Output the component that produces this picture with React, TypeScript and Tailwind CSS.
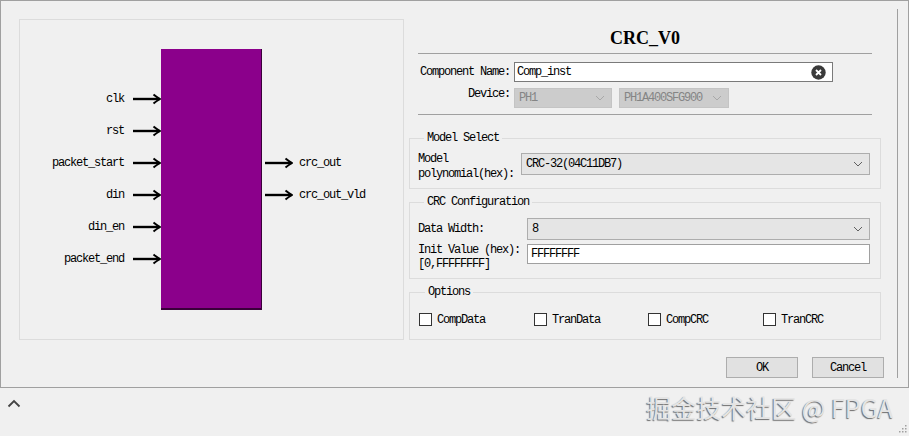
import React from "react";

const ui = "font-['Liberation_Mono',monospace] text-[12px] tracking-[-1.2px] text-black";

const inPorts = ["clk", "rst", "packet_start", "din", "din_en", "packet_end"];
const outPorts = ["crc_out", "crc_out_vld"];
const options = ["CompData", "TranData", "CompCRC", "TranCRC"];

const Arrow = () => (
  <svg width="28" height="12" viewBox="0 0 28 12" className="shrink-0">
    <path d="M0 6H26.5" stroke="#000" strokeWidth="2.4" />
    <path d="M20.5 1.5Q23.5 4 27 6Q23.5 8 20.5 10.5" fill="none" stroke="#000" strokeWidth="2" />
  </svg>
);

const Chevron = ({ color }: { color: string }) => (
  <svg width="10" height="6" viewBox="0 0 10 6" className="shrink-0">
    <path d="M1 1L5 5L9 1" fill="none" stroke={color} strokeWidth="1" />
  </svg>
);

const Select = ({ value, className, disabled }: { value: string; className: string; disabled?: boolean }) => (
  <div
    className={
      "flex items-center justify-between border pl-[4px] pr-[6px] " +
      (disabled ? "border-[#c4c4c4] bg-[#cccccc] text-[#858585] " : "border-[#adadad] bg-[#e5e5e5] ") +
      className
    }
  >
    <span>{value}</span>
    <Chevron color={disabled ? "#a8a8a8" : "#606060"} />
  </div>
);

const Legend = ({ children }: { children: React.ReactNode }) => (
  <legend className="ml-[6px] px-[3px] leading-[14px]">{children}</legend>
);

export default function App() {
  return (
    <div className={"relative h-[436px] w-[909px] overflow-hidden bg-[#f0f0f0] " + ui}>
      {/* dialog frame */}
      <div className="flex h-[388px] border border-[#a0a0a0]">
        {/* symbol preview */}
        <div className="w-[403px] shrink-0 pl-[18px] pt-[18px]">
          <div className="flex h-[321px] w-[385px] items-start border border-[#dcdcdc] pt-[29px]">
            <div className="flex w-[141px] flex-col pt-[34px]">
              {inPorts.map((p) => (
                <div key={p} className="flex h-[32px] items-center justify-end gap-[9px]">
                  <span>{p}</span>
                  <Arrow />
                </div>
              ))}
            </div>
            <div className="h-[261px] w-[101px] border-b-2 border-r border-[#3a003a] bg-[#8b008b]" />
            <div className="flex flex-col pl-[3px] pt-[98px]">
              {outPorts.map((p) => (
                <div key={p} className="flex h-[32px] items-center gap-[6px]">
                  <Arrow />
                  <span>{p}</span>
                </div>
              ))}
            </div>
          </div>
        </div>

        {/* settings */}
        <div className="pt-[8px]">
          <div className="w-[494px] border-r border-[#a0a0a0]">
            <div className="ml-[14px] flex h-[45px] w-[454px] items-end justify-center border-b border-[#a0a0a0] pb-[5px]">
              <span className="font-['Liberation_Serif',serif] text-[18px] font-bold leading-[20px] tracking-normal">CRC_V0</span>
            </div>

            <div className="ml-[14px] mt-[8px] flex items-center">
              <span className="w-[92px] text-right">Component Name:</span>
              <div className="ml-[4px] flex h-[20px] w-[319px] items-center justify-between border border-[#7a7a7a] bg-white pl-[2px] pr-[6px]">
                <span>Comp_inst</span>
                <svg width="15" height="15" viewBox="0 0 15 15">
                  <circle cx="7.5" cy="7.5" r="7.2" fill="#3a3a3a" />
                  <path d="M5 5L10 10M10 5L5 10" stroke="#fff" strokeWidth="1.8" />
                </svg>
              </div>
            </div>

            <div className="ml-[14px] mt-[6px] flex items-start">
              <span className="w-[92px] text-right leading-[12px]">Device:</span>
              <Select value="PH1" disabled className="ml-[4px] h-[20px] w-[98px]" />
              <Select value="PH1A400SFG900" disabled className="ml-[7px] h-[20px] w-[110px]" />
            </div>

            <div className="ml-[14px] mt-[6px] w-[454px] border-t border-[#a0a0a0]" />

            <fieldset className="ml-[5px] mt-[16px] w-[472px] border border-[#dcdcdc] pb-[6px] pl-[8px] pr-[9px] pt-[7px]">
              <Legend>Model Select</Legend>
              <div className="flex items-start">
                <span className="w-[103px] leading-[15px]">
                  Model
                  <br />
                  polynomial(hex):
                </span>
                <Select value="CRC-32(04C11DB7)" className="mt-[1px] h-[22px] w-[349px]" />
              </div>
            </fieldset>

            <fieldset className="ml-[5px] mt-[6px] w-[472px] border border-[#dcdcdc] pb-[7px] pl-[8px] pr-[9px] pt-[9px]">
              <Legend>CRC Configuration</Legend>
              <div className="flex items-center">
                <span className="w-[109px]">Data Width:</span>
                <Select value="8" className="h-[22px] w-[343px]" />
              </div>
              <div className="mt-[3px] flex items-start">
                <span className="w-[109px] leading-[14px]">
                  Init Value (hex):
                  <br />
                  [0,FFFFFFFF]
                </span>
                <div className="mt-[1px] flex h-[20px] w-[343px] items-center border border-[#a0a0a0] bg-white pl-[3px]">
                  FFFFFFFF
                </div>
              </div>
            </fieldset>

            <fieldset className="ml-[5px] mt-[6px] w-[472px] border border-[#dcdcdc] pb-[13px] pl-[9px] pt-[14px]">
              <Legend>Options</Legend>
              <div className="grid grid-cols-[115px_114px_115px_115px]">
                {options.map((o) => (
                  <label key={o} className="flex h-[13px] items-center gap-[5px]">
                    <span className="h-[13px] w-[13px] border border-[#333] bg-white" />
                    <span>{o}</span>
                  </label>
                ))}
              </div>
            </fieldset>

            <div className="mt-[17px] flex justify-end gap-[14px] pr-[13px]">
              <button className="h-[21px] w-[72px] border border-[#adadad] bg-[#e1e1e1]">OK</button>
              <button className="h-[21px] w-[72px] border border-[#adadad] bg-[#e1e1e1]">Cancel</button>
            </div>
          </div>
        </div>
      </div>

      {/* status strip */}
      <div className="flex h-[48px] items-start">
        <svg width="14" height="9" viewBox="0 0 14 9" className="ml-[7px] mt-[11px]">
          <path d="M1.5 7.5L7 2L12.5 7.5" fill="none" stroke="#444" strokeWidth="1.8" />
        </svg>
        <span className="ml-auto mr-[16px] mt-[5px] font-['Noto_Sans_CJK_SC','Noto_Sans',sans-serif] text-[25px] leading-[28px] tracking-normal text-[#e4e4e4] [text-shadow:-1px_1px_1px_rgba(0,0,0,0.55)]">
          掘金技术社区 @ FPGA
        </span>
      </div>

      <svg width="8" height="8" viewBox="0 0 8 8" className="absolute bottom-[3px] right-[2px]">
        <rect x="6" y="0" width="1.5" height="1.5" fill="#a0a0a0" />
        <rect x="3" y="3" width="1.5" height="1.5" fill="#a0a0a0" />
        <rect x="6" y="3" width="1.5" height="1.5" fill="#a0a0a0" />
        <rect x="0" y="6" width="1.5" height="1.5" fill="#a0a0a0" />
        <rect x="3" y="6" width="1.5" height="1.5" fill="#a0a0a0" />
        <rect x="6" y="6" width="1.5" height="1.5" fill="#a0a0a0" />
      </svg>
    </div>
  );
}
